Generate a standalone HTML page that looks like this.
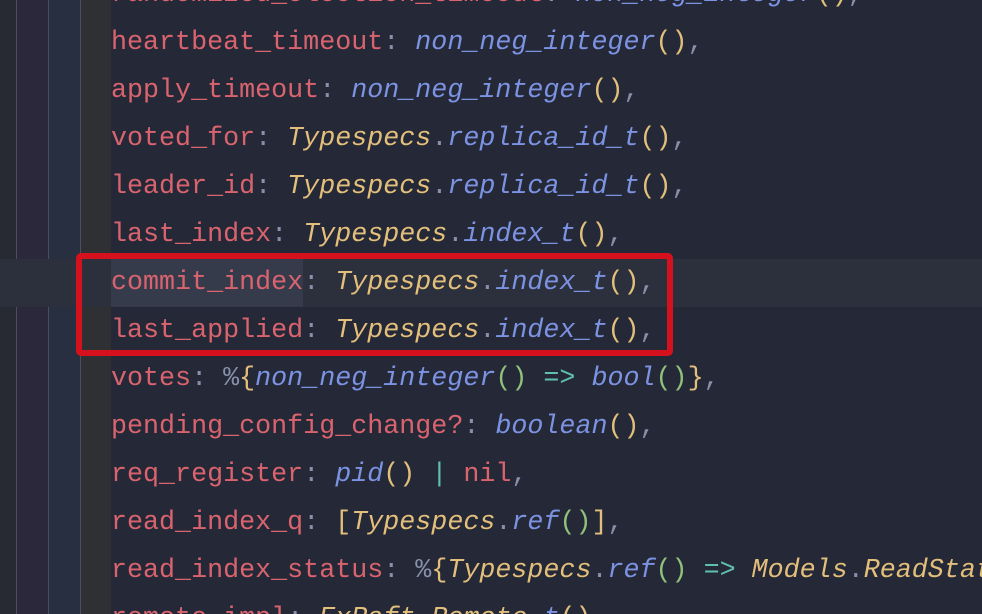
<!DOCTYPE html>
<html><head><meta charset="utf-8"><style>
html,body{margin:0;padding:0;width:982px;height:614px;overflow:hidden;background:#252836;position:relative;}
.g{position:absolute;top:0;height:614px;}
.code{position:absolute;left:111px;top:-29px;width:871px;height:643px;overflow:hidden;font-family:"Liberation Mono",monospace;font-size:26.7px;line-height:48px;color:#d9646f;}
.l{height:48px;white-space:pre;}
.c{color:#8890aa}.t{color:#e3bf7c;font-style:italic}.f{color:#7b93e2;font-style:italic}
.p{color:#e3bf7c}.gp{color:#8fc27a}.a{color:#5fc0b0}.k{color:#d9646f}.d{color:#8890aa}
</style></head><body>
<div class="g" style="left:0;width:16px;background:#272a33"></div>
<div class="g" style="left:16px;width:1px;background:#4a4e60"></div>
<div class="g" style="left:17px;width:31px;background:#2c283c"></div>
<div class="g" style="left:48px;width:1px;background:#4a4e60"></div>
<div class="g" style="left:49px;width:31px;background:#272f40"></div>
<div class="g" style="left:80px;width:1px;background:#4a5064"></div>
<div class="g" style="left:81px;width:30px;background:#2e3034"></div>
<div style="position:absolute;left:0;top:259px;width:982px;height:48px;background:#2c303c"></div>
<div style="position:absolute;left:111px;top:259px;width:192px;height:48px;background:#363b4c"></div>
<div class="code"><div class="l">randomized_election_timeout<span class="c">:</span> <span class="f">non_neg_integer</span><span class="p">()</span><span class="d">,</span></div><div class="l">heartbeat_timeout<span class="c">:</span> <span class="f">non_neg_integer</span><span class="p">()</span><span class="d">,</span></div><div class="l">apply_timeout<span class="c">:</span> <span class="f">non_neg_integer</span><span class="p">()</span><span class="d">,</span></div><div class="l">voted_for<span class="c">:</span> <span class="t">Typespecs</span><span class="d">.</span><span class="f">replica_id_t</span><span class="p">()</span><span class="d">,</span></div><div class="l">leader_id<span class="c">:</span> <span class="t">Typespecs</span><span class="d">.</span><span class="f">replica_id_t</span><span class="p">()</span><span class="d">,</span></div><div class="l">last_index<span class="c">:</span> <span class="t">Typespecs</span><span class="d">.</span><span class="f">index_t</span><span class="p">()</span><span class="d">,</span></div><div class="l">commit_index<span class="c">:</span> <span class="t">Typespecs</span><span class="d">.</span><span class="f">index_t</span><span class="p">()</span><span class="d">,</span></div><div class="l">last_applied<span class="c">:</span> <span class="t">Typespecs</span><span class="d">.</span><span class="f">index_t</span><span class="p">()</span><span class="d">,</span></div><div class="l">votes<span class="c">:</span> <span class="c">%</span><span class="p">{</span><span class="f">non_neg_integer</span><span class="gp">()</span> <span class="a">=&gt;</span> <span class="f">bool</span><span class="gp">()</span><span class="p">}</span><span class="d">,</span></div><div class="l">pending_config_change?<span class="c">:</span> <span class="f">boolean</span><span class="p">()</span><span class="d">,</span></div><div class="l">req_register<span class="c">:</span> <span class="f">pid</span><span class="p">()</span> <span class="a">|</span> <span class="k">nil</span><span class="d">,</span></div><div class="l">read_index_q<span class="c">:</span> <span class="p">[</span><span class="t">Typespecs</span><span class="d">.</span><span class="f">ref</span><span class="gp">()</span><span class="p">]</span><span class="d">,</span></div><div class="l">read_index_status<span class="c">:</span> <span class="c">%</span><span class="p">{</span><span class="t">Typespecs</span><span class="d">.</span><span class="f">ref</span><span class="gp">()</span> <span class="a">=&gt;</span> <span class="t">Models</span><span class="d">.</span><span class="t">ReadStat</span></div><div class="l">remote_impl<span class="c">:</span> <span class="t">ExRaft</span><span class="d">.</span><span class="t">Remote</span><span class="d">.</span><span class="f">t</span><span class="p">()</span><span class="d">,</span></div></div>
<div style="position:absolute;left:76px;top:253px;width:585px;height:91px;border:6px solid #d4111c;border-radius:5px;"></div>
</body></html>
